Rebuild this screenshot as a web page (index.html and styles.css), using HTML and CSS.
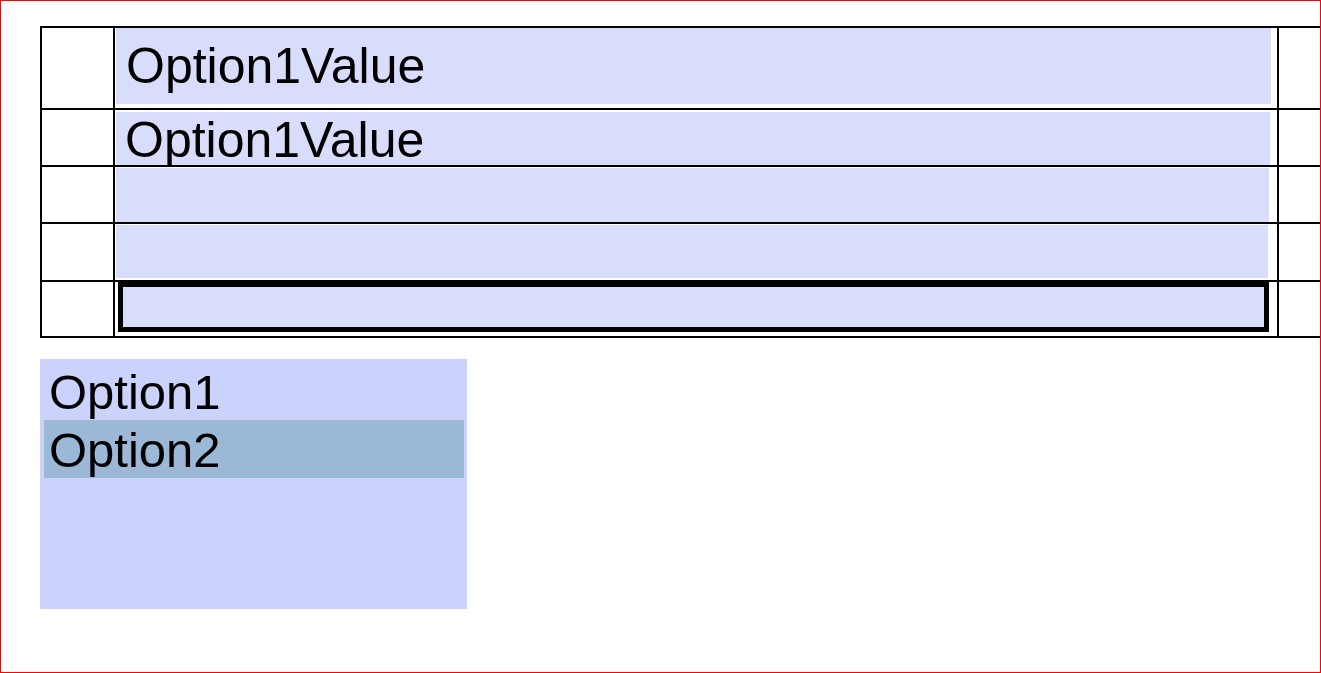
FILE: index.html
```html
<!DOCTYPE html>
<html>
<head>
<meta charset="utf-8">
<link rel="stylesheet" href="styles.css">
</head>
<body>
<div class="frame">
  <div class="grid">
    <div class="cell c1 r1"></div>
    <div class="cell c2 r1"><div class="field f1">Option1Value</div></div>
    <div class="cell c3 r1"></div>

    <div class="cell c1 r2"></div>
    <div class="cell c2 r2"><div class="field f2">Option1Value</div></div>
    <div class="cell c3 r2"></div>

    <div class="cell c1 r3"></div>
    <div class="cell c2 r3"><div class="field f3"></div></div>
    <div class="cell c3 r3"></div>

    <div class="cell c1 r4"></div>
    <div class="cell c2 r4"><div class="field f4"></div></div>
    <div class="cell c3 r4"></div>

    <div class="cell c1 r5"></div>
    <div class="cell c2 r5"><div class="field f5"></div></div>
    <div class="cell c3 r5"></div>
  </div>

  <div class="listbox">
    <div class="option">Option1</div>
    <div class="option selected">Option2</div>
  </div>
</div>
</body>
</html>
```

FILE: styles.css
```css
* {
  box-sizing: border-box;
}

html, body {
  margin: 0;
  padding: 0;
  background: #ffffff;
}

.frame {
  width: 1321px;
  height: 673px;
  border: 1px solid #ff0000;
  padding: 25px 0 0 39px;
  overflow: hidden;
  font-family: "Liberation Sans", Arial, sans-serif;
  color: #000000;
}

.grid {
  display: grid;
  grid-template-columns: 73px 1164px 102px;
  grid-template-rows: 82px 57px 57px 58px 56px;
  width: 1341px;
  border-top: 2px solid #000;
  border-left: 2px solid #000;
}

.cell {
  border-right: 2px solid #000;
  border-bottom: 2px solid #000;
}

.field {
  background: #d9ddfc;
  font-size: 50px;
  padding-left: 9px;
  overflow: hidden;
  white-space: nowrap;
}

.f1 {
  margin: 0 0 0 1px;
  width: 1155px;
  height: 76px;
  line-height: 76px;
  padding-left: 10px;
}

.f2 {
  margin: 2px 0 0 1px;
  width: 1154px;
  height: 53px;
  line-height: 56px;
}

.f3 {
  margin: 1px 0 0 1px;
  width: 1153px;
  height: 54px;
}

.f4 {
  margin: 1px 0 0 1px;
  width: 1152px;
  height: 53px;
}

.f5 {
  margin: 0 0 0 3px;
  width: 1151px;
  height: 50px;
  border: 5px solid #000;
}

.listbox {
  margin-top: 21px;
  width: 427px;
  height: 250px;
  padding: 3px 3px 0 4px;
  background: #cbd3fd;
}

.option {
  height: 58px;
  padding: 4px 0 0 5px;
  font-size: 49px;
  line-height: 53px;
  white-space: nowrap;
}

.option.selected {
  background: #9bb9d7;
}
```
